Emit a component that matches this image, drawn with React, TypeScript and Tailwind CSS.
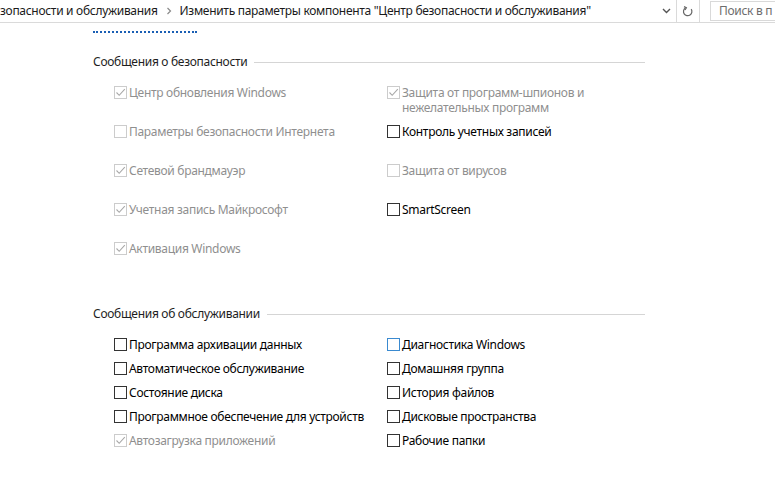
import React from "react";

type Item = { label: string; checked?: boolean; disabled?: boolean; focus?: boolean };

const security: [Item | null, Item | null][] = [
  [
    { label: "Центр обновления Windows", checked: true, disabled: true },
    { label: "Защита от программ-шпионов и нежелательных программ", checked: true, disabled: true },
  ],
  [
    { label: "Параметры безопасности Интернета", disabled: true },
    { label: "Контроль учетных записей" },
  ],
  [
    { label: "Сетевой брандмауэр", checked: true, disabled: true },
    { label: "Защита от вирусов", disabled: true },
  ],
  [
    { label: "Учетная запись Майкрософт", checked: true, disabled: true },
    { label: "SmartScreen" },
  ],
  [{ label: "Активация Windows", checked: true, disabled: true }, null],
];

const maintenance: [Item, Item][] = [
  [{ label: "Программа архивации данных" }, { label: "Диагностика Windows", focus: true }],
  [{ label: "Автоматическое обслуживание" }, { label: "Домашняя группа" }],
  [{ label: "Состояние диска" }, { label: "История файлов" }],
  [{ label: "Программное обеспечение для устройств" }, { label: "Дисковые пространства" }],
  [{ label: "Автозагрузка приложений", checked: true, disabled: true }, { label: "Рабочие папки" }],
];

function Checkbox({ item }: { item: Item }) {
  const border = item.disabled
    ? "border-[#cccccc]"
    : item.focus
      ? "border-[#3a8ad0]"
      : "border-[#333333]";
  return (
    <div className={`w-[13px] h-[13px] mt-[1px] shrink-0 border bg-white flex items-center justify-center ${border}`}>
      {item.checked && (
        <svg width="11" height="11" viewBox="0 0 11 11" fill="none">
          <path d="M1.5 5.5 L4.2 8.3 L9.8 2.2" stroke="#a8a8a8" strokeWidth="1.1" />
        </svg>
      )}
    </div>
  );
}

function Option({ item, wide }: { item: Item | null; wide?: boolean }) {
  if (!item) return <div />;
  return (
    <div className="flex items-start gap-[2px]">
      <Checkbox item={item} />
      <span
        className={`leading-[15px] ${wide ? "w-[255px]" : "w-[195px]"} ${
          item.disabled ? "text-[#8f8f8f]" : "text-black"
        }`}
      >
        {item.label}
      </span>
    </div>
  );
}

function SectionTitle({ title }: { title: string }) {
  return (
    <div className="flex items-center w-[552px] h-[16px]">
      <span className="text-[#1e1e1e] whitespace-nowrap">{title}</span>
      <div className="flex-1 ml-[7px] h-px bg-[#d5d5d5]" />
    </div>
  );
}

export default function App() {
  return (
    <div
      className="w-[775px] h-[494px] bg-white overflow-hidden text-[12px] tracking-[-0.3px]"
      style={{ fontFamily: '"Segoe UI", "Noto Sans", sans-serif' }}
    >
      {/* адресная строка */}
      <div className="flex items-center h-[23px] border-b border-[#dadada]">
        <div className="flex items-center h-full w-[700px] border-r border-[#dadada] overflow-hidden">
          <div className="flex-1 flex items-center whitespace-nowrap text-[#1a1a1a] overflow-hidden">
            <span>зопасности и обслуживания</span>
            <svg className="mx-[8px]" width="6" height="8" viewBox="0 0 6 8">
              <path d="M1.5 1 L4.5 4 L1.5 7" stroke="#8a8a8a" strokeWidth="1.2" fill="none" />
            </svg>
            <span>Изменить параметры компонента "Центр безопасности и обслуживания"</span>
          </div>
          <div className="w-[20px] flex items-center justify-center">
            <svg width="9" height="6" viewBox="0 0 9 6">
              <path d="M1 1 L4.5 4.5 L8 1" stroke="#555" strokeWidth="1.4" fill="none" />
            </svg>
          </div>
          <div className="w-px h-full bg-[#dadada]" />
          <div className="w-[22px] flex items-center justify-center">
            <svg width="12" height="13" viewBox="0 0 12 13" fill="none">
              <path d="M9.2 4.2 A4.2 4.2 0 1 1 3.4 3" stroke="#666" strokeWidth="1.2" />
              <path d="M2 1.6 L4.4 2.8 L3 5" stroke="#666" strokeWidth="1.2" />
            </svg>
          </div>
        </div>
        <div className="ml-[10px] h-[20px] flex-1 border border-r-0 border-[#d9d9d9] flex items-center pl-[8px] text-[#6d6d6d] whitespace-nowrap">
          Поиск в п
        </div>
      </div>

      <div className="pl-[93px]">
        <div className="w-[104px] mt-[8px] h-px border-b-2 border-dotted border-[#1a5fb4]" />

        <div className="mt-[21px]">
          <SectionTitle title="Сообщения о безопасности" />
        </div>
        <div className="ml-[21px] mt-[15px] grid grid-cols-[273px_260px]">
          {security.map((row, i) => (
            <React.Fragment key={i}>
              <div className="h-[39px]">
                <Option item={row[0]} wide />
              </div>
              <div className="h-[39px]">
                <Option item={row[1]} />
              </div>
            </React.Fragment>
          ))}
        </div>

        <div className="mt-[26px]">
          <SectionTitle title="Сообщения об обслуживании" />
        </div>
        <div className="ml-[21px] mt-[15px] grid grid-cols-[273px_260px]">
          {maintenance.map((row, i) => (
            <React.Fragment key={i}>
              <div className="h-[24px]">
                <Option item={row[0]} wide />
              </div>
              <div className="h-[24px]">
                <Option item={row[1]} />
              </div>
            </React.Fragment>
          ))}
        </div>
      </div>
    </div>
  );
}
